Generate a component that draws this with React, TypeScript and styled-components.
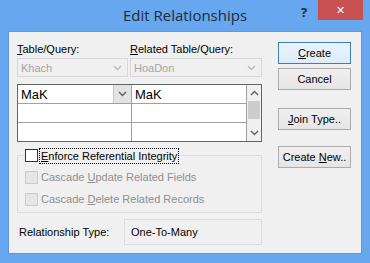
import { FC } from 'react';
import styled, { createGlobalStyle } from 'styled-components';

const GlobalStyle = createGlobalStyle`
  html, body { margin: 0; padding: 0; }
  body { width: 370px; height: 263px; overflow: hidden; }
`;

const Chevron: FC<{ up?: boolean; color?: string }> = ({ up, color = '#606060' }) => (
  <svg width="9" height="6" viewBox="0 0 9 6">
    <path
      d={up ? 'M1 5 L4.5 1.5 L8 5' : 'M1 1 L4.5 4.5 L8 1'}
      fill="none"
      stroke={color}
      strokeWidth="1.4"
    />
  </svg>
);

const App: FC = () => {
  return (
    <>
      <GlobalStyle />
      <Frame>
        <TitleBar>
          <Title>Edit Relationships</Title>
          <HelpButton>?</HelpButton>
          <CloseButton>✕</CloseButton>
        </TitleBar>
        <Client>
          <LeftColumn>
            <LabelRow>
              <FieldLabel $width={113}><u>T</u>able/Query:</FieldLabel>
              <FieldLabel><u>R</u>elated Table/Query:</FieldLabel>
            </LabelRow>
            <ComboRow>
              <Combo $width={111}>
                <span>Khach</span>
                <Chevron color="#b8b8b8" />
              </Combo>
              <Combo $width={132}>
                <span>HoaDon</span>
                <Chevron color="#b8b8b8" />
              </Combo>
            </ComboRow>
            <FieldGrid>
              <Columns>
                <Column $width={113}>
                  <Cell>
                    <span>MaK</span>
                    <CellDrop><Chevron /></CellDrop>
                  </Cell>
                  <Cell />
                  <Cell $last />
                </Column>
                <Column $width={114}>
                  <Cell><span>MaK</span></Cell>
                  <Cell />
                  <Cell $last />
                </Column>
              </Columns>
              <ScrollBar>
                <ScrollArrow><Chevron up /></ScrollArrow>
                <ScrollTrack><Thumb /></ScrollTrack>
                <ScrollArrow><Chevron /></ScrollArrow>
              </ScrollBar>
            </FieldGrid>
            <Group>
              <Legend>
                <CheckBox />
                <FocusLabel><u>E</u>nforce Referential Integrity</FocusLabel>
              </Legend>
              <CheckRow>
                <CheckBox $disabled />
                <DisabledText>Cascade <u>U</u>pdate Related Fields</DisabledText>
              </CheckRow>
              <CheckRow>
                <CheckBox $disabled />
                <DisabledText>Cascade <u>D</u>elete Related Records</DisabledText>
              </CheckRow>
            </Group>
            <TypeRow>
              <TypeLabel>Relationship Type:</TypeLabel>
              <TypeBox>One-To-Many</TypeBox>
            </TypeRow>
          </LeftColumn>
          <ButtonColumn>
            <Button $default><span><u>C</u>reate</span></Button>
            <Button><span>Cancel</span></Button>
            <Button $gap={14}><span><u>J</u>oin Type..</span></Button>
            <Button $gap={12}><span>Create <u>N</u>ew..</span></Button>
          </ButtonColumn>
        </Client>
      </Frame>
    </>
  );
};

export default App;

const Frame = styled.div`
  width: 370px;
  height: 263px;
  box-sizing: border-box;
  background: #67a7ef;
  padding: 0 8px 9px 8px;
  display: flex;
  flex-direction: column;
  font-family: 'Liberation Sans', Arial, sans-serif;
  font-size: 11px;
  color: #000;
`;

const TitleBar = styled.div`
  height: 31px;
  position: relative;
  display: flex;
  align-items: center;
  justify-content: center;
`;

const Title = styled.div`
  font-family: 'Open Sans', 'Noto Sans', sans-serif;
  font-size: 15px;
  color: #1d2b3b;
  margin-top: -2px;
`;

const HelpButton = styled.div`
  position: absolute;
  left: 293px;
  top: 3px;
  font-family: 'Open Sans', sans-serif;
  font-weight: 700;
  font-size: 13px;
  color: #1d2b3b;
`;

const CloseButton = styled.div`
  position: absolute;
  right: -1px;
  top: 0;
  width: 45px;
  height: 20px;
  background: #c75050;
  color: #fff;
  font-size: 11px;
  display: flex;
  align-items: center;
  justify-content: center;
`;

const Client = styled.div`
  flex: 1;
  background: #f0f0f0;
  border: 1px solid #5b9ae2;
  display: flex;
  padding: 0 0 0 8px;
`;

const LeftColumn = styled.div`
  width: 245px;
  display: flex;
  flex-direction: column;
`;

const LabelRow = styled.div`
  display: flex;
  margin-top: 10px;
  height: 14px;
  align-items: center;
`;

const FieldLabel = styled.div<{ $width?: number }>`
  width: ${(p) => (p.$width ? `${p.$width}px` : 'auto')};
`;

const ComboRow = styled.div`
  display: flex;
  gap: 2px;
  margin-top: 2px;
`;

const Combo = styled.div<{ $width: number }>`
  width: ${(p) => p.$width}px;
  height: 19px;
  box-sizing: border-box;
  border: 1px solid #d9d9d9;
  background: #f0f0f0;
  color: #a3a3a3;
  display: flex;
  align-items: center;
  justify-content: space-between;
  padding: 0 5px 0 3px;
`;

const FieldGrid = styled.div`
  margin-top: 7px;
  height: 58px;
  box-sizing: border-box;
  border: 1px solid #646464;
  background: #fff;
  display: flex;
`;

const Columns = styled.div`
  display: flex;
  flex: 1;
`;

const Column = styled.div<{ $width: number }>`
  width: ${(p) => p.$width}px;
  border-right: 1px solid #a0a0a0;
  display: flex;
  flex-direction: column;
`;

const Cell = styled.div<{ $last?: boolean }>`
  height: 19px;
  box-sizing: border-box;
  border-bottom: ${(p) => (p.$last ? 'none' : '1px solid #a0a0a0')};
  display: flex;
  align-items: center;
  justify-content: space-between;
  padding-left: 3px;
  font-size: 13px;
  flex: ${(p) => (p.$last ? 1 : 'none')};
`;

const CellDrop = styled.div`
  width: 17px;
  height: 18px;
  background: #e3e3e3;
  border-left: 1px solid #c8c8c8;
  display: flex;
  align-items: center;
  justify-content: center;
`;

const ScrollBar = styled.div`
  width: 16px;
  background: #f0f0f0;
  display: flex;
  flex-direction: column;
`;

const ScrollArrow = styled.div`
  height: 16px;
  display: flex;
  align-items: center;
  justify-content: center;
`;

const ScrollTrack = styled.div`
  flex: 1;
  padding: 0 1px;
`;

const Thumb = styled.div`
  height: 18px;
  background: #cdcdcd;
`;

const Group = styled.fieldset`
  margin: 5px 0 0 0;
  padding: 0 0 4px 7px;
  border: 1px solid #dcdcdc;
  height: 66px;
  box-sizing: border-box;
`;

const Legend = styled.legend`
  padding: 0;
  display: flex;
  align-items: center;
  gap: 2px;
  height: 17px;
`;

const CheckBox = styled.div<{ $disabled?: boolean }>`
  width: 13px;
  height: 13px;
  box-sizing: border-box;
  border: 1px solid ${(p) => (p.$disabled ? '#cbcbcb' : '#333')};
  background: ${(p) => (p.$disabled ? '#e6e6e6' : '#fff')};
`;

const FocusLabel = styled.span`
  outline: 1px dotted #000;
  padding: 1px 1px;
`;

const CheckRow = styled.div`
  display: flex;
  align-items: center;
  gap: 3px;
  height: 22px;
  &:first-of-type {
    margin-top: 2px;
  }
`;

const DisabledText = styled.span`
  color: #8f8f8f;
`;

const TypeRow = styled.div`
  display: flex;
  align-items: center;
  margin-top: 6px;
`;

const TypeLabel = styled.div`
  width: 105px;
  padding-left: 2px;
`;

const TypeBox = styled.div`
  flex: 1;
  height: 26px;
  box-sizing: border-box;
  border: 1px solid #dcdcdc;
  display: flex;
  align-items: center;
  padding-left: 6px;
`;

const ButtonColumn = styled.div`
  display: flex;
  flex-direction: column;
  margin-left: 16px;
  padding-top: 10px;
  gap: 4px;
`;

const Button = styled.div<{ $default?: boolean; $gap?: number }>`
  width: 73px;
  height: 22px;
  box-sizing: border-box;
  border: 1px solid ${(p) => (p.$default ? '#3c7fb1' : '#acacac')};
  background: ${(p) => (p.$default ? 'linear-gradient(#eaf3fb, #dcecfc)' : 'linear-gradient(#f0f0f0, #e5e5e5)')};
  display: flex;
  align-items: center;
  justify-content: center;
  margin-top: ${(p) => p.$gap ?? 0}px;
`;
